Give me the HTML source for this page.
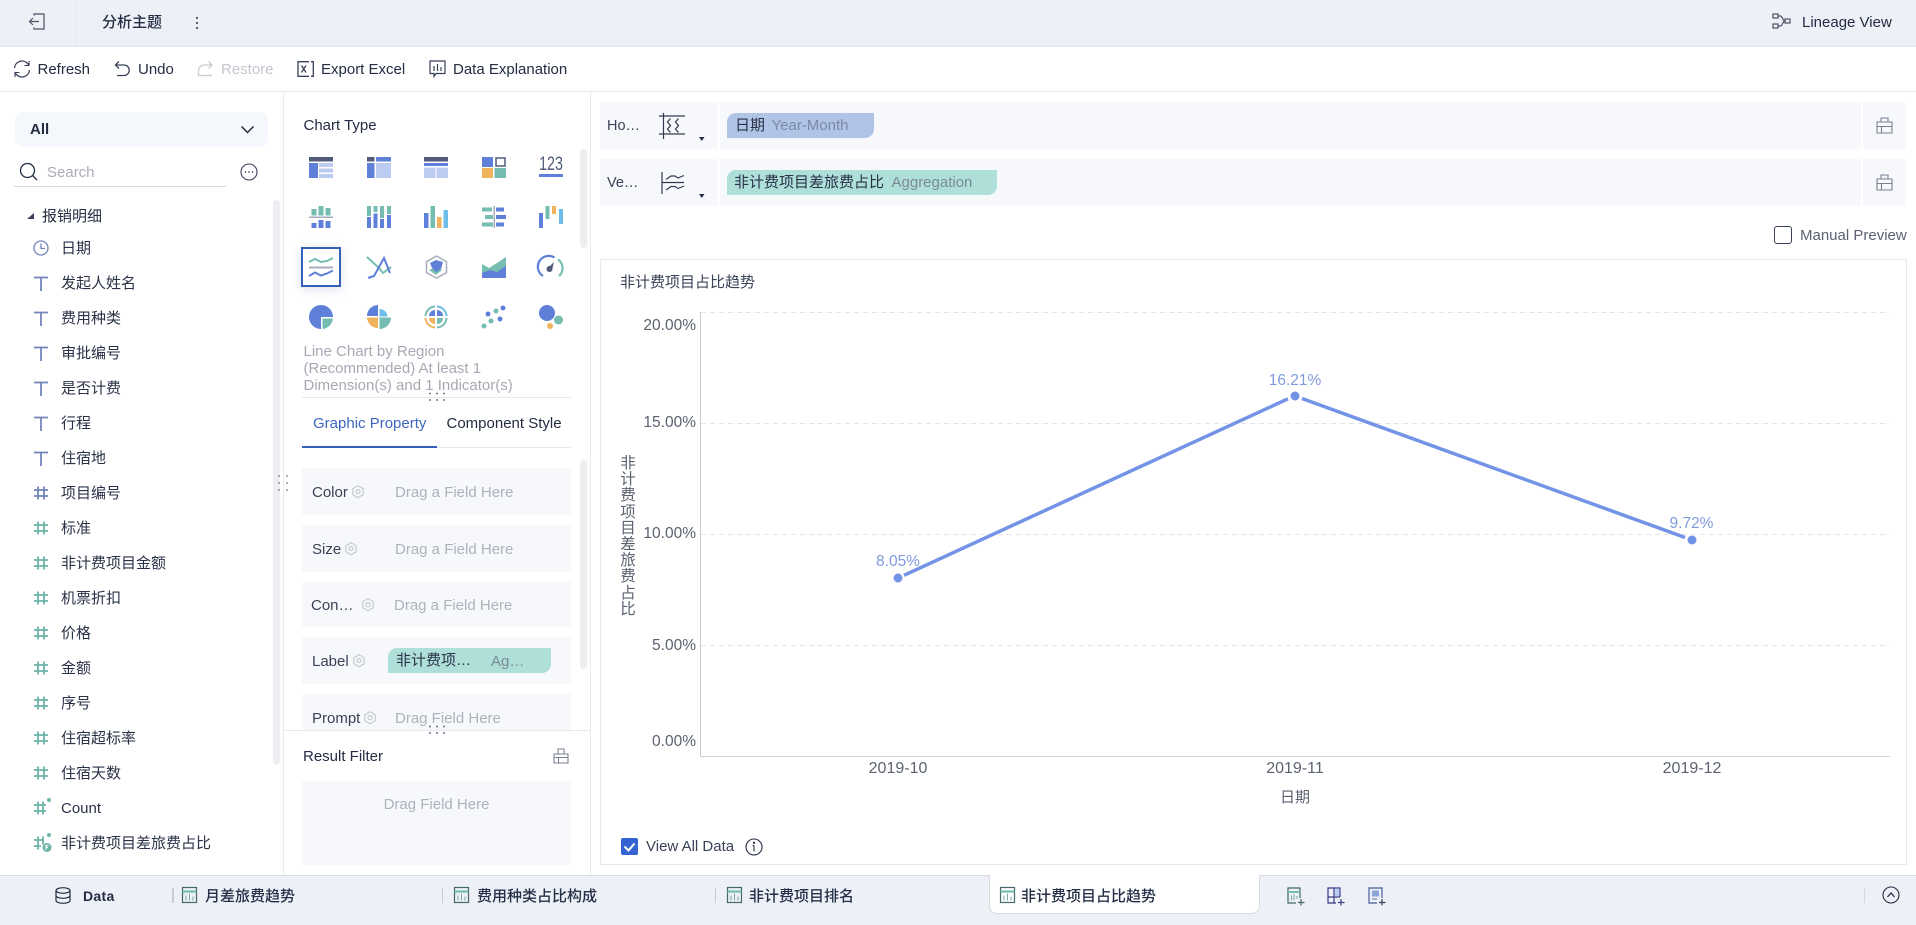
<!DOCTYPE html>
<html lang="zh"><head><meta charset="utf-8"><title>分析主题</title>
<style>
html,body{margin:0;padding:0;width:1916px;height:925px;overflow:hidden;background:#fff}
body{position:relative;font-family:"Liberation Sans","Noto Sans CJK SC",sans-serif;font-size:15px;color:#232c42}
.a{position:absolute}
.t{position:absolute;white-space:nowrap;line-height:20px;font-size:15px}
.i{position:absolute;left:61px;white-space:nowrap;line-height:20px;font-size:15px;color:#2a3247}
svg{position:absolute;overflow:visible}
.r{position:absolute;left:302px;width:269px;background:#f7f8fc}
.g{color:#aeb2bc}
.sb{position:absolute;background:#eceef2;border-radius:4px;width:7px}
.chip{position:absolute;border-radius:9px 0 9px 0}
.tab{position:absolute;top:887px;line-height:20px;font-size:15px;font-weight:500;white-space:nowrap;color:#253048}
</style></head><body>

<!-- top bar -->
<div class="a" style="left:0;top:0;width:1916px;height:46px;background:#edf0f6;border-bottom:1px solid #e2e4e9"></div>
<div class="a" style="left:76px;top:0;width:1px;height:46px;background:#e6e8ee"></div>
<svg style="left:28px;top:13px" width="18" height="18" viewBox="0 0 18 18" fill="none" stroke="#4a5266" stroke-width="1.2"><path d="M6 2.500V1h10v15H6v-1.500"/><path d="M11 8.500H1.500M5 5L1.500 8.500 5 12"/></svg>
<div class="t" style="left:102px;top:13px;font-weight:500;color:#252e44">分析主题</div>
<svg style="left:195px;top:15px" width="4" height="15"><circle cx="2" cy="3" r="1.100" fill="#4a5266"/><circle cx="2" cy="8" r="1.100" fill="#4a5266"/><circle cx="2" cy="13" r="1.100" fill="#4a5266"/></svg>
<svg style="left:1772px;top:13px" width="19" height="16" viewBox="0 0 19 16" fill="none" stroke="#4a5266" stroke-width="1.2"><rect x="1" y="1" width="5" height="4"/><rect x="1" y="11" width="5" height="4"/><rect x="13" y="6" width="5" height="4"/><path d="M6 3h2.500c2 0 2 5 4.500 5M6 13h2.500c2 0 2-5 4.500-5"/></svg>
<div class="t" style="left:1802px;top:12.500px">Lineage View</div>

<!-- toolbar -->
<div class="a" style="left:0;top:91px;width:1916px;height:1px;background:#e6e8ec"></div>
<svg style="left:13px;top:60px" width="18" height="18" viewBox="0 0 18 18" fill="none" stroke="#39415a" stroke-width="1.3"><path d="M1.500 8a7.500 7.500 0 0 1 13-4.500l1.500 1.500M16.500 10a7.500 7.500 0 0 1-13 4.500L2 13"/><path d="M16 1v4.500h-4.500M2 17v-4.500h4.500" stroke-width="1.100"/></svg>
<div class="t" style="left:37.500px;top:60px">Refresh</div>
<svg style="left:114px;top:60px" width="17" height="17" viewBox="0 0 17 17" fill="none" stroke="#39415a" stroke-width="1.3"><path d="M5 1.500L1.500 5 5 8.500"/><path d="M1.500 5H10a5 5 0 0 1 0 10.500H3"/></svg>
<div class="t" style="left:138px;top:60px">Undo</div>
<svg style="left:197px;top:60px" width="17" height="17" viewBox="0 0 17 17" fill="none" stroke="#c9ccd3" stroke-width="1.3"><path d="M11.500 1.500L15 5l-3.500 3.500"/><path d="M15 5H7a5.500 5.500 0 0 0-5.500 5.500V15.500H15"/></svg>
<div class="t" style="left:221px;top:60px;color:#c4c7ce">Restore</div>
<svg style="left:297px;top:61px" width="17" height="16" viewBox="0 0 17 16" fill="none" stroke="#39415a" stroke-width="1.3"><path d="M12 .7H1v14.600h11"/><path d="M14 .7h2.300v14.600H14"/><path d="M4.500 4.500l4.500 7M9 4.500l-4.500 7"/></svg>
<div class="t" style="left:321px;top:60px">Export Excel</div>
<svg style="left:429px;top:60px" width="17" height="17" viewBox="0 0 17 17" fill="none" stroke="#39415a" stroke-width="1.2"><path d="M1 1h15v12.500h-9l-2 3v-3H1z"/><path d="M5 6v5M8.500 4v7M12 7v4"/></svg>
<div class="t" style="left:453px;top:60px">Data Explanation</div>

<!-- panel dividers -->
<div class="a" style="left:283px;top:92px;width:1px;height:783px;background:#e9ebef"></div>
<div class="a" style="left:590px;top:92px;width:1px;height:783px;background:#e9ebef"></div>

<!-- left panel -->
<div class="a" style="left:15px;top:112px;width:253px;height:35px;background:#f4f7fc;border-radius:9px"></div>
<div class="t" style="left:30px;top:120px;font-weight:bold">All</div>
<svg style="left:240px;top:125px" width="15" height="9"><path d="M1.500 1.500L7.500 7.500 13.500 1.500" fill="none" stroke="#232c42" stroke-width="1.500"/></svg>
<svg style="left:19px;top:162px" width="19" height="19" fill="none" stroke="#232c42" stroke-width="1.300"><circle cx="8.500" cy="8.500" r="7"/><path d="M13.500 13.500L18 18"/></svg>
<div class="t" style="left:47px;top:163px;color:#a9adb7">Search</div>
<div class="a" style="left:14px;top:186px;width:212px;height:1px;background:#d9dbe0"></div>
<svg style="left:240px;top:163px" width="18" height="18" fill="none" stroke="#39415a" stroke-width="1.100"><circle cx="9" cy="9" r="8"/><circle cx="5.500" cy="9" r=".6" fill="#39415a" stroke-width=".5"/><circle cx="9" cy="9" r=".6" fill="#39415a" stroke-width=".5"/><circle cx="12.500" cy="9" r=".6" fill="#39415a" stroke-width=".5"/></svg>
<div class="sb" style="left:273px;top:200px;height:565px"></div>
<svg style="left:27px;top:212px" width="8" height="8"><path d="M7 1v6H0z" fill="#39415a"/></svg>
<div class="i" style="left:42px;top:207px;color:#252e44">报销明细</div>

<svg style="left:33px;top:240px" width="16" height="16" fill="none" stroke="#7285bb" stroke-width="1.300"><circle cx="8" cy="8" r="7"/><path d="M8 3.500V8.500H12"/></svg>
<div class="i" style="top:239px">日期</div>

<svg style="left:0;top:0" width="60" height="860" fill="none">
<g stroke="#7285bb" stroke-width="1.800"><path d="M34 277.500h14M41 277.500V291"/><path d="M34 312.500h14M41 312.500V326"/><path d="M34 347.500h14M41 347.500V361"/><path d="M34 382.500h14M41 382.500V396"/><path d="M34 417.500h14M41 417.500V431"/><path d="M34 452.500h14M41 452.500V466"/>
<path d="M34 490h14M34 496h14M38 486.500v13M44 486.500v13"/></g>
<g stroke="#6cb3a8" stroke-width="1.800"><path d="M34 525h14M34 531h14M38 521.500v13M44 521.500v13"/><path d="M34 560h14M34 566h14M38 556.500v13M44 556.500v13"/><path d="M34 595h14M34 601h14M38 591.500v13M44 591.500v13"/><path d="M34 630h14M34 636h14M38 626.500v13M44 626.500v13"/><path d="M34 665h14M34 671h14M38 661.500v13M44 661.500v13"/><path d="M34 700h14M34 706h14M38 696.500v13M44 696.500v13"/><path d="M34 735h14M34 741h14M38 731.500v13M44 731.500v13"/><path d="M34 770h14M34 776h14M38 766.500v13M44 766.500v13"/>
<path d="M34 805h12M34 811h12M38 801.500v13M43 801.500v13"/><path d="M34 840h10M34 846h7M38 836.500v13M43 836.500v8"/></g>
<g fill="#6cb3a8"><circle cx="49" cy="800" r="2"/><circle cx="49" cy="835" r="2"/><circle cx="47" cy="847.500" r="4.500"/></g>
<path d="M46 850v-4.500h2.500M46 847.500h2" stroke="#fff" stroke-width="1"/>
</svg>
<div class="i" style="top:274px">发起人姓名</div>
<div class="i" style="top:309px">费用种类</div>
<div class="i" style="top:344px">审批编号</div>
<div class="i" style="top:379px">是否计费</div>
<div class="i" style="top:414px">行程</div>
<div class="i" style="top:449px">住宿地</div>
<div class="i" style="top:484px">项目编号</div>
<div class="i" style="top:519px">标准</div>
<div class="i" style="top:554px">非计费项目金额</div>
<div class="i" style="top:589px">机票折扣</div>
<div class="i" style="top:624px">价格</div>
<div class="i" style="top:659px">金额</div>
<div class="i" style="top:694px">序号</div>
<div class="i" style="top:729px">住宿超标率</div>
<div class="i" style="top:764px">住宿天数</div>
<div class="i" style="top:799px">Count</div>
<div class="i" style="top:834px">非计费项目差旅费占比</div>

<!-- splitter -->
<svg style="left:278px;top:474px" width="10" height="20" fill="#8a8f9b"><circle cx="1" cy="2" r="1"/><circle cx="9" cy="2" r="1"/><circle cx="1" cy="9" r="1"/><circle cx="9" cy="9" r="1"/><circle cx="1" cy="16" r="1"/><circle cx="9" cy="16" r="1"/></svg>

<!-- middle panel -->
<div class="t" style="left:303.500px;top:116px">Chart Type</div>
<div class="sb" style="left:580px;top:149px;height:99px"></div>

<!-- chart type row1 -->
<svg style="left:309px;top:157px" width="24" height="21"><rect width="24" height="4.500" fill="#4f5b78"/><rect y="6" width="9" height="15" fill="#5f80d9"/><rect x="10" y="6" width="14" height="4" fill="#bccbf0"/><rect x="10" y="11.500" width="14" height="4" fill="#bccbf0"/><rect x="10" y="17" width="14" height="4" fill="#bccbf0"/></svg>
<svg style="left:367px;top:157px" width="24" height="21"><rect width="7.500" height="4.500" fill="#4f5b78"/><rect x="9" width="15" height="4.500" fill="#5f80d9"/><rect y="6" width="7.500" height="15" fill="#5f80d9"/><rect x="9" y="6" width="15" height="15" fill="#bccbf0"/></svg>
<svg style="left:424px;top:157px" width="24" height="21"><rect width="24" height="4.500" fill="#4f5b78"/><rect y="6" width="24" height="3" fill="#5f80d9"/><rect y="10.500" width="11.500" height="10.500" fill="#bccbf0"/><rect x="12.500" y="10.500" width="11.500" height="10.500" fill="#bccbf0"/></svg>
<svg style="left:482px;top:157px" width="24" height="21"><rect width="11" height="10" fill="#5f80d9"/><rect x="14" y="1" width="9" height="8" fill="#fff" stroke="#4f5b78" stroke-width="1.500"/><rect y="11" width="11" height="10" fill="#f0b35e"/><rect x="12.500" y="11" width="11.500" height="10" fill="#75bdb0"/></svg>
<div class="t" style="left:531px;top:155px;width:40px;text-align:center;font-size:19px;color:#4f5b78;line-height:20px;transform:scaleX(.75)">123</div>
<div class="a" style="left:539px;top:174px;width:24px;height:3px;background:#5f80d9"></div>

<!-- row2 -->
<svg style="left:309px;top:206px" width="24" height="22"><rect x="2.500" y="3" width="5" height="6.500" fill="#75bdb0"/><rect x="9.500" y="0" width="5" height="9.500" fill="#75bdb0"/><rect x="16.500" y="2" width="5" height="7.500" fill="#75bdb0"/><rect y="10.500" width="24" height="1.500" fill="#a9aebd"/><rect x="2.500" y="17" width="5" height="5" fill="#5f80d9"/><rect x="9.500" y="14" width="5" height="8" fill="#5f80d9"/><rect x="16.500" y="15" width="5" height="7" fill="#5f80d9"/></svg>
<svg style="left:367px;top:206px" width="24" height="22"><g fill="#75bdb0"><rect width="4" height="10"/><rect x="6.500" width="4" height="6"/><rect x="13" width="4" height="12"/><rect x="20" width="4" height="8"/></g><g fill="#5f80d9"><rect y="11" width="4" height="11"/><rect x="6.500" y="7.500" width="4" height="14.500"/><rect x="13" y="13" width="4" height="9"/><rect x="20" y="9" width="4" height="13"/></g></svg>
<svg style="left:424px;top:206px" width="24" height="22"><rect y="7" width="4.500" height="15" fill="#5f80d9"/><rect x="6.500" width="4.500" height="22" fill="#75bdb0"/><rect x="13" y="11" width="4.500" height="11" fill="#f0b35e"/><rect x="19.500" y="4" width="4.500" height="18" fill="#6dbde8"/></svg>
<svg style="left:482px;top:206px" width="24" height="22"><rect y="1.500" width="10" height="4" fill="#75bdb0"/><rect x="3" y="9" width="8" height="4" fill="#75bdb0"/><rect y="16.500" width="11" height="4" fill="#75bdb0"/><rect x="11.500" width="1.500" height="22" fill="#a9aebd"/><rect x="14" y="1.500" width="8" height="4" fill="#5f80d9"/><rect x="14" y="9" width="10" height="4" fill="#5f80d9"/><rect x="14" y="16.500" width="8" height="4" fill="#5f80d9"/></svg>
<svg style="left:539px;top:206px" width="24" height="22"><rect y="7" width="4" height="15" fill="#5f80d9"/><rect x="6.500" width="4" height="13" fill="#75bdb0"/><rect x="13" width="4" height="8" fill="#f0b35e"/><rect x="20" y="3" width="4" height="15" fill="#6dbde8"/></svg>

<!-- row3 -->
<div class="a" style="left:301px;top:247px;width:36px;height:36px;border:2px solid #3560b8;box-shadow:0 2px 10px rgba(60,90,160,.18)"></div>
<svg style="left:309px;top:257px" width="24" height="21" fill="none" stroke-width="2"><path d="M0 5l6-3 6 3 6-1 6-3" stroke="#75bdb0"/><rect y="9.500" width="24" height="2" fill="#a9aebd" stroke="none"/><path d="M0 19l6-3.500 6 3 6-2 6-3" stroke="#5f80d9"/></svg>
<svg style="left:367px;top:257px" width="24" height="22" fill="none" stroke-width="2"><path d="M0 0L12 11l4 5 8-6" stroke="#75bdb0"/><path d="M1 21l6-2L17 1l6 15" stroke="#5f80d9"/></svg>
<svg style="left:425px;top:255px" width="23" height="24" fill="none"><path d="M11.500 1l10 5.700v11L11.500 23l-10-5.300v-11z" stroke="#a9aebd" stroke-width="1.500"/><path d="M4 15l7-3 6 3-6 5z" fill="#75bdb0"/><path d="M5 8l6-3 7 2-2 7-5 3-4-4z" fill="#5f80d9"/></svg>
<svg style="left:482px;top:257px" width="24" height="21"><path d="M0 7l7 4 8-5 9-6v14l-9 3-7-2-8 3z" fill="#75bdb0"/><path d="M0 16l8-3 7 2 9-6v12H0z" fill="#5f80d9"/></svg>
<svg style="left:539px;top:256px" width="24" height="22" fill="none" stroke-width="2.200"><path d="M4 20A10.500 10.500 0 0 1 15.500 1.500" stroke="#5f80d9"/><path d="M19 3.500A10.500 10.500 0 0 1 20 20" stroke="#75bdb0"/><path d="M9 12l6-6-2 8z" fill="#4f5b78" stroke="none"/><circle cx="10.500" cy="13" r="3" fill="#4f5b78" stroke="none"/></svg>

<!-- row4 -->
<svg style="left:309px;top:305px" width="24" height="24"><path d="M12 0a12 12 0 1 0 0 24V12h12A12 12 0 0 0 12 0z" fill="#5f80d9"/><path d="M13.500 13.500H24A12 12 0 0 1 13.500 24z" fill="#75bdb0"/></svg>
<svg style="left:367px;top:305px" width="24" height="24"><path d="M11 0v11H0A11 11 0 0 1 11 0z" fill="#5f80d9"/><path d="M12.500 4h0a8 8 0 0 1 8 7.500h-8z" fill="#6dbde8"/><path d="M0 12.500h11V23A11 11 0 0 1 0 12.500z" fill="#f0b35e"/><path d="M12.500 12.500H24A11.500 11.500 0 0 1 12.500 24z" fill="#75bdb0"/></svg>
<svg style="left:424px;top:305px" width="24" height="24" fill="none"><path d="M1.500 11A10 10 0 0 1 11 1.500" stroke="#75bdb0" stroke-width="2"/><path d="M13 1.500A10 10 0 0 1 22.500 11" stroke="#6dbde8" stroke-width="2"/><path d="M1.500 13A10 10 0 0 0 11 22.500" stroke="#f0b35e" stroke-width="2"/><path d="M13 22.500A10 10 0 0 0 22.500 13" stroke="#75bdb0" stroke-width="2"/><path d="M11 5v6H5a6 6 0 0 1 6-6z" fill="#5f80d9"/><path d="M13 5a6 6 0 0 1 6 6h-6z" fill="#5f80d9"/><path d="M5 13h6v6a6 6 0 0 1-6-6z" fill="#f0b35e"/><path d="M13 13h6a6 6 0 0 1-6 6z" fill="#75bdb0"/></svg>
<svg style="left:482px;top:305px"  width="24" height="24"><g fill="#5f80d9"><circle cx="6" cy="9" r="2.500"/><circle cx="21" cy="3" r="2.500"/><circle cx="18" cy="14" r="2.500"/></g><g fill="#75bdb0"><circle cx="14" cy="6" r="2.500"/><circle cx="9" cy="16" r="2.500"/><circle cx="2" cy="21" r="2.500"/></g></svg>
<svg style="left:539px;top:305px" width="24" height="24"><circle cx="8" cy="8" r="8" fill="#5f80d9"/><circle cx="19.500" cy="15" r="4.500" fill="#75bdb0"/><circle cx="11" cy="21" r="3" fill="#f0b35e"/></svg>

<div class="a" style="left:303.500px;top:342.500px;width:275px;line-height:17.300px;font-size:15px;color:#a5a9b3">Line Chart by Region<br>(Recommended) At least 1<br>Dimension(s) and 1 Indicator(s)</div>
<div class="a" style="left:302px;top:397px;width:269px;height:1px;background:#e6e8ec"></div>
<svg style="left:428px;top:392px" width="18" height="10" fill="#70757f"><circle cx="2" cy="1.500" r="1"/><circle cx="9" cy="1.500" r="1"/><circle cx="16" cy="1.500" r="1"/><circle cx="2" cy="8" r="1"/><circle cx="9" cy="8" r="1"/><circle cx="16" cy="8" r="1"/></svg>

<div class="t" style="left:313px;top:414px;color:#3d67c0">Graphic Property</div>
<div class="t" style="left:446.500px;top:414px">Component Style</div>
<div class="a" style="left:302px;top:447px;width:269px;height:1px;background:#e6e8ec"></div>
<div class="a" style="left:302px;top:446px;width:135px;height:2px;background:#3560b8"></div>
<div class="sb" style="left:580px;top:460px;height:209px"></div>

<div class="r" style="top:468px;height:47px"></div>
<div class="r" style="top:525px;height:47px"></div>
<div class="r" style="top:582px;height:45px"></div>
<div class="r" style="top:637px;height:47px"></div>
<div class="r" style="top:694px;height:36px"></div>

<div class="t" style="left:312px;top:483px;color:#3a4258">Color</div>
<div class="t" style="left:312px;top:540px;color:#3a4258">Size</div>
<div class="t" style="left:311px;top:596px;color:#3a4258">Con…</div>
<div class="t" style="left:312px;top:652px;color:#3a4258">Label</div>
<div class="t" style="left:312px;top:709px;color:#3a4258">Prompt</div>
<div class="t g" style="left:395px;top:483px">Drag a Field Here</div>
<div class="t g" style="left:395px;top:540px">Drag a Field Here</div>
<div class="t g" style="left:394px;top:596px">Drag a Field Here</div>
<div class="t g" style="left:395px;top:709px">Drag Field Here</div>
<svg style="left:0;top:0" width="400" height="730" fill="none" stroke="#c2c5cd" stroke-width="1.100">
<path d="M358 485.700l5.200 3v6l-5.200 3-5.200-3v-6z"/><circle cx="358" cy="491.700" r="2"/>
<path d="M351 542.700l5.200 3v6l-5.200 3-5.200-3v-6z"/><circle cx="351" cy="548.700" r="2"/>
<path d="M368 598.700l5.200 3v6l-5.200 3-5.200-3v-6z"/><circle cx="368" cy="604.700" r="2"/>
<path d="M359 654.700l5.200 3v6l-5.200 3-5.200-3v-6z"/><circle cx="359" cy="660.700" r="2"/>
<path d="M370 711.700l5.200 3v6l-5.200 3-5.200-3v-6z"/><circle cx="370" cy="717.700" r="2"/>
</svg>
<div class="chip" style="left:388px;top:648px;width:163px;height:25px;background:#aedfd9"></div>
<div class="t" style="left:396px;top:651px;color:#2a3247">非计费项…</div>
<div class="t" style="left:491px;top:651.500px;color:#7b8a93">Ag…</div>

<div class="a" style="left:284px;top:730px;width:306px;height:145px;background:#fff;border-top:1px solid #e6e8ec"></div>
<svg style="left:428px;top:725px" width="18" height="10" fill="#70757f"><circle cx="2" cy="1.500" r="1"/><circle cx="9" cy="1.500" r="1"/><circle cx="16" cy="1.500" r="1"/><circle cx="2" cy="8" r="1"/><circle cx="9" cy="8" r="1"/><circle cx="16" cy="8" r="1"/></svg>
<div class="t" style="left:303px;top:747px">Result Filter</div>
<svg style="left:553px;top:748px" width="16" height="16" fill="none" stroke="#7a8190" stroke-width="1.100"><path d="M1 6h14v9H1zM5 6V1h6v5M1 9.500h14M5.500 9.500V15"/></svg>
<div class="a" style="left:302px;top:781px;width:269px;height:84px;background:#f7f8fc"></div>
<div class="t g" style="left:302px;top:795px;width:269px;text-align:center">Drag Field Here</div>

<!-- right: axis rows -->
<div class="a" style="left:600px;top:102px;width:1261px;height:47px;background:#f7f8fc"></div>
<div class="a" style="left:1863px;top:102px;width:43px;height:47px;background:#f7f8fc"></div>
<div class="a" style="left:718px;top:102px;width:2px;height:47px;background:#fff"></div>
<div class="a" style="left:600px;top:159px;width:1261px;height:47px;background:#f7f8fc"></div>
<div class="a" style="left:1863px;top:159px;width:43px;height:47px;background:#f7f8fc"></div>
<div class="a" style="left:718px;top:159px;width:2px;height:47px;background:#fff"></div>
<div class="t" style="left:607px;top:116px;font-size:14.500px;color:#3a4258">Ho…</div>
<div class="t" style="left:607px;top:173px;font-size:14.500px;color:#3a4258">Ve…</div>
<svg style="left:659px;top:112px" width="27" height="27" fill="none" stroke="#333b50" stroke-width="1.200"><path d="M0 4h26M0 22h26M4.500 1v26"/><path d="M11.500 6.500l-3 3.500 3 3.500-3 3.500 3 3.500M19.500 6.500l-3 3.500 3 3.500-3 3.500 3 3.500" stroke-width="1.200"/></svg>
<svg style="left:660px;top:172px" width="26" height="24" fill="none" stroke="#333b50" stroke-width="1.200"><path d="M2 0v22"/><path d="M6 7.500l5-3.500 4 0 3 2 6-2.500M2 10.500h22"/><path d="M6 18l5-3.500 4 0 3 2 6-2.500"/></svg>
<svg style="left:699px;top:137px" width="6" height="5"><path d="M0 0h5.500L2.800 4z" fill="#232c42"/></svg>
<svg style="left:699px;top:194px" width="6" height="5"><path d="M0 0h5.500L2.800 4z" fill="#232c42"/></svg>
<div class="chip" style="left:727px;top:113px;width:147px;height:25px;background:#afc4e6"></div>
<div class="t" style="left:735px;top:116px;color:#2a3247">日期</div>
<div class="t" style="left:771.500px;top:116px;color:#7d8aa3">Year-Month</div>
<div class="chip" style="left:727px;top:170px;width:270px;height:25px;background:#aedfd9"></div>
<div class="t" style="left:734px;top:173px;color:#2a3247">非计费项目差旅费占比</div>
<div class="t" style="left:891.500px;top:173px;color:#7b8a93">Aggregation</div>
<svg style="left:1876px;top:117px" width="17" height="17" fill="none" stroke="#7a8190" stroke-width="1.100"><path d="M1 5h15v11H1zM5 5V1h7v4M1 9.500h15M5.500 9.500V16"/></svg>
<svg style="left:1876px;top:174px" width="17" height="17" fill="none" stroke="#7a8190" stroke-width="1.100"><path d="M1 5h15v11H1zM5 5V1h7v4M1 9.500h15M5.500 9.500V16"/></svg>

<div class="a" style="left:1774px;top:226px;width:16px;height:16px;border:1.200px solid #39415a;border-radius:3px"></div>
<div class="t" style="left:1800px;top:226px;color:#5a6274">Manual Preview</div>

<!-- chart -->
<div class="a" style="left:600px;top:259px;width:1305px;height:604px;border:1px solid #e8e9ec"></div>
<div class="t" style="left:620px;top:273px;color:#3a4258">非计费项目占比趋势</div>
<svg style="left:0;top:0" width="1916" height="925" fill="none">
<g stroke="#e4e5e9" stroke-width="1" stroke-dasharray="5 4"><path d="M701 312.500H1890M701 423.500H1890M701 534.500H1890M701 645.500H1890"/></g>
<path d="M700.500 312V757" stroke="#c8cad0" stroke-width="1"/>
<path d="M700 756.500H1890" stroke="#d0d2d8" stroke-width="1"/>
<path d="M904 575.300L1288 398.800M1302 398.500L1685 537.500" stroke="#7393e6" stroke-width="3.500"/>
<g fill="#7393e6"><circle cx="898" cy="578" r="4.500"/><circle cx="1295" cy="396" r="4.500"/><circle cx="1692" cy="540" r="4.500"/></g>
</svg>
<div class="t" style="left:596px;top:316px;width:100px;text-align:right;font-size:15.500px;color:#5b6270">20.00%</div>
<div class="t" style="left:596px;top:412.500px;width:100px;text-align:right;font-size:15.500px;color:#5b6270">15.00%</div>
<div class="t" style="left:596px;top:524px;width:100px;text-align:right;font-size:15.500px;color:#5b6270">10.00%</div>
<div class="t" style="left:596px;top:636px;width:100px;text-align:right;font-size:15.500px;color:#5b6270">5.00%</div>
<div class="t" style="left:596px;top:731.500px;width:100px;text-align:right;font-size:15.500px;color:#5b6270">0.00%</div>
<div class="a" style="left:618px;top:456px;width:20px;line-height:16.200px;font-size:15.500px;color:#5b6270;text-align:center">非<br>计<br>费<br>项<br>目<br>差<br>旅<br>费<br>占<br>比</div>
<div class="t" style="left:848px;top:552px;width:100px;text-align:center;font-size:15.500px;color:#7f9bde">8.05%</div>
<div class="t" style="left:1245px;top:371px;width:100px;text-align:center;font-size:15.500px;color:#7f9bde">16.21%</div>
<div class="t" style="left:1641.500px;top:514px;width:100px;text-align:center;font-size:15.500px;color:#7f9bde">9.72%</div>
<div class="t" style="left:848px;top:759px;width:100px;text-align:center;font-size:16px;color:#5b6270">2019-10</div>
<div class="t" style="left:1245px;top:759px;width:100px;text-align:center;font-size:16px;color:#5b6270">2019-11</div>
<div class="t" style="left:1642px;top:759px;width:100px;text-align:center;font-size:16px;color:#5b6270">2019-12</div>
<div class="t" style="left:1245px;top:787.500px;width:100px;text-align:center;color:#5b6270">日期</div>
<div class="a" style="left:621px;top:838px;width:17px;height:17px;background:#3563d4;border-radius:2px"></div>
<svg style="left:621px;top:838px" width="17" height="17" fill="none"><path d="M3.500 8.500l4 4 6-7" stroke="#fff" stroke-width="2"/></svg>
<div class="t" style="left:646px;top:837px;color:#3a4258">View All Data</div>
<svg style="left:745px;top:838px" width="18" height="18" fill="none" stroke="#232c42" stroke-width="1.100"><circle cx="9" cy="9" r="8"/><path d="M9 7.500v6M7.500 7.500H9" /><circle cx="9" cy="4.800" r=".6" fill="#232c42"/></svg>

<!-- bottom bar -->
<div class="a" style="left:0;top:875px;width:1916px;height:50px;background:#edf0f6;border-top:1px solid #d9dbe0;box-sizing:border-box"></div>
<div class="a" style="left:989px;top:875px;width:271px;height:39px;background:#fff;border:1px solid #d9dbe0;border-top:0;border-radius:0 0 8px 8px;box-sizing:border-box"></div>
<svg style="left:55px;top:887px" width="16" height="17" fill="none" stroke="#232c42" stroke-width="1.200"><ellipse cx="8" cy="3.500" rx="7" ry="2.800"/><path d="M1 3.500v10c0 1.500 3 2.800 7 2.800s7-1.300 7-2.800v-10M1 8.500c0 1.500 3 2.800 7 2.800s7-1.300 7-2.800"/></svg>
<div class="t" style="left:83px;top:886px;font-size:14px;font-weight:bold;letter-spacing:.3px">Data</div>
<div class="a" style="left:172px;top:888px;width:1.500px;height:15px;background:#c9ccd3"></div>
<div class="a" style="left:442px;top:888px;width:1px;height:15px;background:#c9ccd3"></div>
<div class="a" style="left:715px;top:888px;width:1px;height:15px;background:#c9ccd3"></div>
<svg style="left:0;top:0" width="1100" height="925" fill="none">
<g><rect x="182.500" y="887.500" width="14" height="15" stroke="#41696a" stroke-width="1.200"/><path d="M182.500 891.500h14" stroke="#75bdb0" stroke-width="2.200"/><path d="M186 895.500v5M189.500 893.500v7M193 896.500v4" stroke="#75a9a8" stroke-width="1"/></g>
<g transform="translate(272)"><rect x="182.500" y="887.500" width="14" height="15" stroke="#41696a" stroke-width="1.200"/><path d="M182.500 891.500h14" stroke="#75bdb0" stroke-width="2.200"/><path d="M186 895.500v5M189.500 893.500v7M193 896.500v4" stroke="#75a9a8" stroke-width="1"/></g>
<g transform="translate(545)"><rect x="182.500" y="887.500" width="14" height="15" stroke="#41696a" stroke-width="1.200"/><path d="M182.500 891.500h14" stroke="#75bdb0" stroke-width="2.200"/><path d="M186 895.500v5M189.500 893.500v7M193 896.500v4" stroke="#75a9a8" stroke-width="1"/></g>
<g transform="translate(818)"><rect x="182.500" y="887.500" width="14" height="15" stroke="#41696a" stroke-width="1.200"/><path d="M182.500 891.500h14" stroke="#75bdb0" stroke-width="2.200"/><path d="M186 895.500v5M189.500 893.500v7M193 896.500v4" stroke="#75a9a8" stroke-width="1"/></g>
</svg>
<div class="tab" style="left:205px">月差旅费趋势</div>
<div class="tab" style="left:477px">费用种类占比构成</div>
<div class="tab" style="left:749px">非计费项目排名</div>
<div class="tab" style="left:1021px">非计费项目占比趋势</div>
<svg style="left:1287px;top:887px" width="18" height="19" fill="none"><path d="M9 16H1V1h12v10" stroke="#41696a" stroke-width="1.200"/><path d="M1 5h12" stroke="#75bdb0" stroke-width="2"/><path d="M4.500 8.500v5M7 7v6.500M10 9v3" stroke="#75a9a8"/><path d="M14 12v6.500M11 15.500h6.500" stroke="#41696a" stroke-width="1.200"/></svg>
<svg style="left:1327px;top:887px" width="18" height="19" fill="none" stroke="#3b3a86" stroke-width="1.200"><path d="M9 16H1V1h12v9"/><path d="M7 1v15M1 10h12"/><rect x="7.500" y="1.500" width="5" height="8" fill="#bccbf0" stroke="none"/><path d="M14 12v6.500M11 15.500h6.500"/></svg>
<svg style="left:1368px;top:887px" width="18" height="19" fill="none"><path d="M9 16H1V1h13v10" stroke="#5f72a8" stroke-width="1.400"/><rect x="4" y="3.500" width="7" height="6" fill="#8ea5d8"/><path d="M4 12h5" stroke="#5f72a8"/><path d="M14 12v6.500M11 15.500h6.500" stroke="#3b4258" stroke-width="1.200"/></svg>
<div class="a" style="left:1864px;top:888px;width:1px;height:15px;background:#d5d7dd"></div>
<svg style="left:1882px;top:886px" width="18" height="18" fill="none" stroke="#232c42" stroke-width="1.100"><circle cx="9" cy="9" r="8"/><path d="M5.500 11L9 7l3.500 4" stroke-width="1.300"/></svg>
</body></html>
